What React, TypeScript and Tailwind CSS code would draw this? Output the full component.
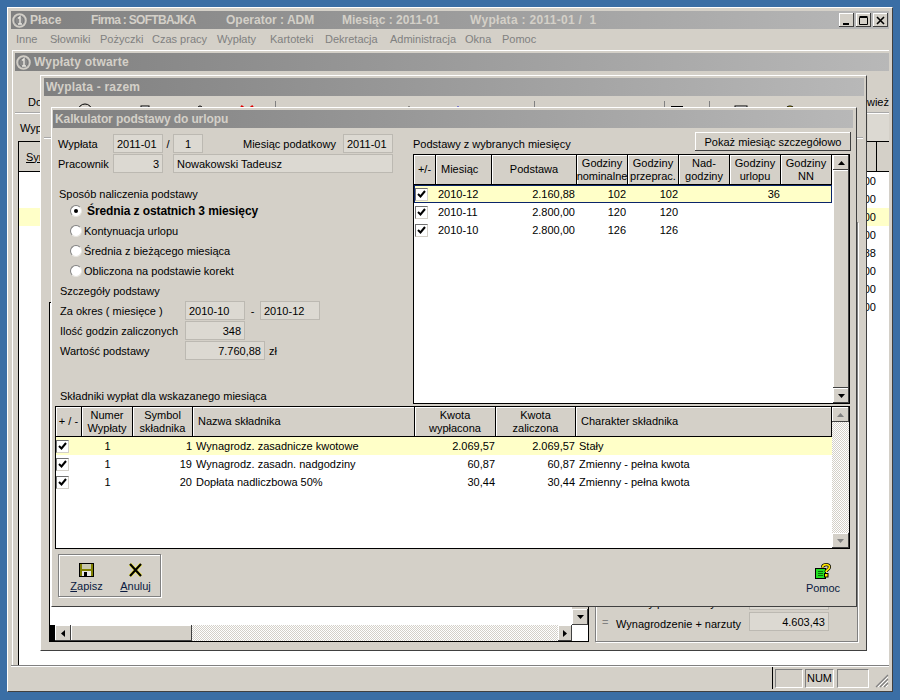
import React from "react";

const win = "border border-t-white border-l-white border-r-[#404040] border-b-[#404040] bg-[#d4d0c8]";
const dither = "bg-[repeating-conic-gradient(#d4d0c8_0_25%,#ffffff_0_50%)] bg-[length:2px_2px]";

function Title({ children, className = "" }: { children: React.ReactNode; className?: string }) {
  return (
    <div className={"h-[18px] shrink-0 flex items-center bg-gradient-to-r from-[#808080] to-[#b8b8b8] text-[#d4d0c8] font-bold font-['Liberation_Sans',sans-serif] text-[12px] whitespace-pre " + className}>
      {children}
    </div>
  );
}

function Logo() {
  return (
    <svg width="15" height="15" viewBox="0 0 15 15" className="shrink-0 mx-[1px]">
      <circle cx="7.5" cy="7.5" r="6.5" fill="#a8a8a8" stroke="#d4d0c8" strokeWidth="1.5" />
      <circle cx="7.5" cy="7.5" r="4.5" fill="#8a8a8a" stroke="#5f5f5f" strokeWidth="0.6" />
      <path d="M6 5.5 L8 3.8 V11 M6 11 H10" fill="none" stroke="#e8e6e0" strokeWidth="1.4" />
    </svg>
  );
}

function Arrow({ dir, color = "#000" }: { dir: "up" | "down" | "left" | "right"; color?: string }) {
  const pts = { up: "0,4 7,4 3.5,0", down: "0,0 7,0 3.5,4", left: "4,0 4,7 0,3.5", right: "0,0 0,7 4,3.5" }[dir];
  const h = dir === "up" || dir === "down";
  return (
    <svg width={h ? 7 : 4} height={h ? 4 : 7} viewBox={h ? "0 0 7 4" : "0 0 4 7"}>
      <polygon points={pts} fill={color} />
    </svg>
  );
}

function ScrollBtn({ dir, color, className = "" }: { dir: "up" | "down" | "left" | "right"; color?: string; className?: string }) {
  return (
    <div className={"shrink-0 flex items-center justify-center bg-[#d4d0c8] shadow-[inset_-1px_-1px_0_#404040,inset_1px_1px_0_#ffffff] " + className}>
      <Arrow dir={dir} color={color} />
    </div>
  );
}

function Check() {
  return (
    <div className="w-[13px] h-[13px] flex items-center justify-center bg-white border border-t-[#707070] border-l-[#707070] border-r-[#d4d0c8] border-b-[#d4d0c8]">
      <svg width="9" height="8" viewBox="0 0 9 8">
        <path d="M1 4 L3.5 6.5 L8 1" fill="none" stroke="#000" strokeWidth="2" />
      </svg>
    </div>
  );
}

function Field({ w, align = "left", children }: { w: string; align?: "left" | "right" | "center"; children: React.ReactNode }) {
  const a = align === "right" ? "justify-end pr-[3px]" : align === "center" ? "justify-center" : "justify-start pl-[3px]";
  return <div className={"h-[19px] flex items-center border border-[#bcb9b2] bg-[#dcd9d2] shrink-0 whitespace-nowrap " + w + " " + a}>{children}</div>;
}

function Radio({ on = false, bold = false, children }: { on?: boolean; bold?: boolean; children: React.ReactNode }) {
  return (
    <div className="h-[20px] flex items-center pl-[12px]">
      <div className="w-[12px] h-[12px] rounded-full bg-white border border-t-[#808080] border-l-[#808080] border-r-[#e8e6e0] border-b-[#e8e6e0] flex items-center justify-center shrink-0">
        {on && <div className="w-[4px] h-[4px] rounded-full bg-black" />}
      </div>
      <span className={bold ? "ml-[5px] font-bold text-[12px] tracking-[-0.1px] whitespace-nowrap" : "ml-[2px] whitespace-nowrap"}>{children}</span>
    </div>
  );
}

function Head({ w, children, left = false }: { w: string; children: React.ReactNode; left?: boolean }) {
  return (
    <div className={"shrink-0 h-full flex items-center border-r border-black bg-[#d4d0c8] shadow-[inset_1px_1px_0_#ffffff] leading-[13px] whitespace-nowrap " + w + (left ? " justify-start pl-[5px]" : " justify-center text-center")}>
      <span>{children}</span>
    </div>
  );
}

const topRows = [
  { m: "2010-12", p: "2.160,88", a: "102", b: "102", u: "36" },
  { m: "2010-11", p: "2.800,00", a: "120", b: "120", u: "" },
  { m: "2010-10", p: "2.800,00", a: "126", b: "126", u: "" },
];

const lowRows = [
  { s: "1", n: "Wynagrodz. zasadnicze kwotowe", k: "2.069,57", c: "Stały" },
  { s: "19", n: "Wynagrodz. zasadn. nadgodziny", k: "60,87", c: "Zmienny - pełna kwota" },
  { s: "20", n: "Dopłata nadliczbowa 50%", k: "30,44", c: "Zmienny - pełna kwota" },
];

function Dialog() {
  return (
    <div className={"absolute left-[39px] top-[57px] w-[806px] h-[500px] " + win}>
      <Title className="ml-[1px] mt-[2px] w-[800px] pl-[2px] tracking-[-0.1px]">Kalkulator podstawy do urlopu</Title>
      <div className="flex pl-[6px] h-[276px]">
        <div className="w-[335px] shrink-0">
          <div className="flex items-center mt-[6px]">
            <span className="w-[55px]">Wypłata</span>
            <Field w="w-[50px]">2011-01</Field>
            <span className="w-[10px] text-center">/</span>
            <Field w="w-[30px]" align="center">1</Field>
            <span className="ml-[40px] w-[100px] whitespace-nowrap">Miesiąc podatkowy</span>
            <Field w="w-[50px]">2011-01</Field>
          </div>
          <div className="flex items-center mt-[1px]">
            <span className="w-[55px]">Pracownik</span>
            <Field w="w-[50px]" align="right">3</Field>
            <span className="w-[10px]" />
            <Field w="w-[220px]">Nowakowski Tadeusz</Field>
          </div>
          <div className="mt-[14px] h-[15px] leading-[15px] pl-[1px]">Sposób naliczenia podstawy</div>
          <div className="-mt-[1px]">
            <Radio on bold>Średnia z ostatnich 3 miesięcy</Radio>
            <Radio>Kontynuacja urlopu</Radio>
            <Radio>Średnia z bieżącego miesiąca</Radio>
            <Radio>Obliczona na podstawie korekt</Radio>
          </div>
          <div className="mt-[2px] h-[16px] leading-[16px] pl-[2px]">Szczegóły podstawy</div>
          <div className="flex items-center mt-[2px] pl-[2px]">
            <span className="w-[125px] whitespace-nowrap">Za okres ( miesięce )</span>
            <Field w="w-[60px]">2010-10</Field>
            <span className="w-[15px] text-center">-</span>
            <Field w="w-[60px]">2010-12</Field>
          </div>
          <div className="flex items-center mt-[1px] pl-[2px]">
            <span className="w-[125px] whitespace-nowrap">Ilość godzin zaliczonych</span>
            <Field w="w-[60px]" align="right">348</Field>
          </div>
          <div className="flex items-center mt-[1px] pl-[2px]">
            <span className="w-[125px] whitespace-nowrap">Wartość podstawy</span>
            <Field w="w-[80px]" align="right">7.760,88</Field>
            <span className="ml-[4px]">zł</span>
          </div>
          <div className="mt-[28px] h-[16px] leading-[16px] pl-[2px] whitespace-nowrap">Składniki wypłat dla wskazanego miesiąca</div>
        </div>
        <div className="w-[438px] ml-[20px] shrink-0">
          <div className="flex justify-between items-end mt-[4px] h-[19px]">
            <span className="leading-[14px]">Podstawy z wybranych miesięcy</span>
            <div className="w-[156px] h-[19px] flex items-center justify-center bg-[#d4d0c8] shadow-[inset_-1px_-1px_0_#404040,inset_1px_1px_0_#ffffff] whitespace-nowrap">Pokaż miesiąc szczegółowo</div>
          </div>
          <div className="mt-[3px] w-[437px] h-[250px] border border-black bg-white flex">
            <div className="w-[418px] shrink-0 flex flex-col">
              <div className="flex h-[30px] border-b border-black shrink-0">
                <Head w="w-[22px]">+/-</Head>
                <Head w="w-[56px]" left>Miesiąc</Head>
                <Head w="w-[85px]">Podstawa</Head>
                <Head w="w-[51px]">Godziny<br />nominalne</Head>
                <Head w="w-[51px]">Godziny<br />przeprac.</Head>
                <Head w="w-[51px]">Nad-<br />godziny</Head>
                <Head w="w-[51px]">Godziny<br />urlopu</Head>
                <Head w="w-[51px]">Godziny<br />NN</Head>
              </div>
              {topRows.map((r, i) => (
                <div key={r.m} className={"flex h-[18px] items-center " + (i === 0 ? "bg-[#ffffc8] outline outline-1 -outline-offset-1 outline-[#0a246a]" : "")}>
                  <div className="w-[22px] pl-[1px] shrink-0"><Check /></div>
                  <div className="w-[56px] pl-[2px] shrink-0">{r.m}</div>
                  <div className="w-[85px] pr-[2px] text-right shrink-0">{r.p}</div>
                  <div className="w-[51px] pr-[2px] text-right shrink-0">{r.a}</div>
                  <div className="w-[51px] pr-[1px] text-right shrink-0">{r.b}</div>
                  <div className="w-[51px] shrink-0" />
                  <div className="w-[51px] pr-[1px] text-right shrink-0">{r.u}</div>
                </div>
              ))}
            </div>
            <div className="flex-1 flex flex-col bg-[#d4d0c8] border-l border-white">
              <ScrollBtn dir="up" className="h-[15px]" />
              <div className="flex-1 shadow-[inset_-1px_-1px_0_#404040,inset_1px_1px_0_#ffffff]" />
              <ScrollBtn dir="down" className="h-[15px]" />
            </div>
          </div>
        </div>
      </div>
      <div className="ml-[3px] mt-[2px] w-[795px] h-[143px] border border-black bg-white flex">
        <div className="w-[776px] shrink-0 flex flex-col">
          <div className="flex h-[30px] border-b border-black shrink-0">
            <Head w="w-[26px]">+ / -</Head>
            <Head w="w-[51px]">Numer<br />Wypłaty</Head>
            <Head w="w-[60px]">Symbol<br />składnika</Head>
            <Head w="w-[222px]" left>Nazwa składnika</Head>
            <Head w="w-[81px]">Kwota<br />wypłacona</Head>
            <Head w="w-[80px]">Kwota<br />zaliczona</Head>
            <Head w="w-[256px]" left>Charakter składnika</Head>
          </div>
          {lowRows.map((r, i) => (
            <div key={r.s} className={"flex h-[18px] items-center " + (i === 0 ? "bg-[#ffffc8]" : "")}>
              <div className="w-[26px] shrink-0"><Check /></div>
              <div className="w-[51px] text-center shrink-0">1</div>
              <div className="w-[60px] pr-[1px] text-right shrink-0">{r.s}</div>
              <div className="w-[222px] pl-[3px] shrink-0 whitespace-nowrap">{r.n}</div>
              <div className="w-[81px] pr-[1px] text-right shrink-0">{r.k}</div>
              <div className="w-[80px] pr-[1px] text-right shrink-0">{r.k}</div>
              <div className="pl-[3px] whitespace-nowrap">{r.c}</div>
            </div>
          ))}
        </div>
        <div className={"flex-1 flex flex-col " + dither}>
          <ScrollBtn dir="up" color="#808080" className="h-[15px]" />
          <div className="flex-1" />
          <ScrollBtn dir="down" color="#808080" className="h-[15px]" />
        </div>
      </div>
      <div className="flex justify-between items-start mt-[5px] ml-[6px] mr-[17px]">
        <div className="w-[103px] h-[43px] border border-[#808080] shadow-[1px_1px_0_#ffffff,inset_1px_1px_0_#ffffff] flex pl-[3px] text-[#0a1a40]">
          <div className="w-[49px] flex flex-col items-center pt-[8px]">
            <svg width="15" height="14" viewBox="0 0 15 14">
              <rect x="0.5" y="0.5" width="14" height="13" fill="#808000" stroke="#000" />
              <rect x="3" y="1" width="9" height="5" fill="#c8c8b0" />
              <rect x="3" y="8" width="9" height="5" fill="#e8e8e8" />
              <rect x="5" y="9" width="3" height="4" fill="#000" />
            </svg>
            <span className="mt-[2px]"><span className="underline">Z</span>apisz</span>
          </div>
          <div className="w-[49px] flex flex-col items-center pt-[8px]">
            <svg width="15" height="14" viewBox="0 0 15 14">
              <path d="M2 1 L13 13 M13 1 L2 13" stroke="#f2ea4a" strokeWidth="3.4" />
              <path d="M2 1 L13 13 M13 1 L2 13" stroke="#000" strokeWidth="2.2" />
            </svg>
            <span className="mt-[2px]"><span className="underline">A</span>nuluj</span>
          </div>
        </div>
        <div className="w-[32px] flex flex-col items-center pt-[9px] text-[#0a1a40]">
          <svg width="16" height="16" viewBox="0 0 16 16">
            <rect x="0.5" y="5.5" width="10" height="10" fill="#22e022" stroke="#000" />
            <path d="M3 8.5 H8 M3 10.5 H8 M3 12.5 H8" stroke="#0a6a0a" />
            <path d="M7.5 4.5 C7.5 1 14.5 0.5 14.5 4 C14.5 6.5 11 6.5 11 9" fill="none" stroke="#000" strokeWidth="3.2" />
            <path d="M7.5 4.5 C7.5 1 14.5 0.5 14.5 4 C14.5 6.5 11 6.5 11 9" fill="none" stroke="#ffe600" strokeWidth="1.7" />
            <rect x="9.5" y="10.5" width="3.5" height="3.5" fill="#ffe600" stroke="#000" />
          </svg>
          <span className="mt-[2px]">Pomoc</span>
        </div>
      </div>
    </div>
  );
}

function RazemWindow() {
  return (
    <div className={"absolute left-[28px] top-[25px] w-[827px] h-[576px] flex flex-col " + win}>
      <Title className="ml-[3px] mt-[2px] w-[820px] pl-[2px] tracking-[0.2px]">Wyplata - razem</Title>
      <svg width="820" height="12" viewBox="0 0 820 12" className="ml-[3px] mt-[4px] shrink-0">
        <path d="M34 11 A7 7 0 0 1 48 11" fill="none" stroke="#000" />
        <rect x="97" y="6" width="8" height="6" fill="#fff" stroke="#000" />
        <path d="M153 8 Q156 4 159 8" fill="none" stroke="#000" />
        <path d="M197 6 L203 11 M209 6 L203 11" stroke="#e00000" strokeWidth="2.4" />
        <rect x="231" y="1" width="1" height="11" fill="#808080" />
        <rect x="267" y="9" width="6" height="3" fill="#00e8e8" />
        <path d="M361 11 A4 4 0 0 1 369 11" fill="#00d000" stroke="#000" />
        <path d="M401 11 L405 7 L409 11Z" fill="#e00000" />
        <path d="M403 11 L407 7 L411 11Z" fill="#f0e000" />
        <path d="M410 11 L414 6 L418 11Z" fill="#0000d0" />
        <rect x="459" y="8" width="10" height="4" fill="#fff" stroke="#000" />
        <rect x="490" y="1" width="1" height="11" fill="#808080" />
        <rect x="620" y="1" width="1" height="11" fill="#808080" />
        <rect x="627" y="6" width="12" height="2" fill="#000" />
        <path d="M650 11 L652 8 L654 11Z" fill="#0000d0" />
        <rect x="665" y="1" width="1" height="11" fill="#808080" />
        <rect x="691" y="6" width="12" height="6" fill="#fff" stroke="#000" />
        <path d="M741 11 A5 5 0 0 1 751 11" fill="#ffe600" stroke="#000" />
        <path d="M797 11 L800 7" stroke="#000" />
      </svg>
      <div className="mx-[3px] mt-[25px] h-[2px] bg-[#a8a8a8] border-b border-white shrink-0" />
      <div className="flex-1" />
      <div className="flex items-end gap-[6px] pl-[8px] pb-[8px]">
        <div className="w-[540px] h-[340px] border border-black bg-white flex flex-col">
          <div className="flex-1 flex justify-end">
            <div className="w-[16px] flex flex-col justify-end bg-[#d4d0c8]">
              <ScrollBtn dir="down" className="h-[16px]" />
            </div>
          </div>
          <div className="h-[16px] flex shrink-0">
            <div className="w-[5px] bg-black shrink-0" />
            <ScrollBtn dir="left" className="w-[16px]" />
            <div className="w-[121px] shrink-0 bg-[#d4d0c8] shadow-[inset_-1px_-1px_0_#404040,inset_1px_1px_0_#ffffff]" />
            <div className={"flex-1 " + dither} />
            <ScrollBtn dir="right" className="w-[14px]" />
            <div className="w-[16px] bg-white shrink-0" />
          </div>
        </div>
        <div className="w-[263px] h-[420px] border border-[#808080] shadow-[inset_1px_1px_0_#ffffff,1px_1px_0_#ffffff] flex flex-col justify-end pb-[10px] pl-[6px]">
          <div className="flex items-center h-[19px] mb-[2px]">
            <span className="w-[14px]" />
            <span className="w-[133px] mt-[4px] whitespace-nowrap">Narzuty pracodawcy</span>
            <Field w="w-[80px]" align="right">1.000,00</Field>
          </div>
          <div className="flex items-center h-[19px]">
            <span className="w-[14px] text-[#808080] mt-[1px]">=</span>
            <span className="w-[133px] mt-[4px] whitespace-nowrap">Wynagrodzenie + narzuty</span>
            <Field w="w-[80px]" align="right">4.603,43</Field>
          </div>
        </div>
      </div>
    </div>
  );
}

function OtwarteWindow() {
  const vals = ["1.200,00", "1.500,00", "2.800,00", "1.900,00", "3.120,88", "2.400,00", "1.700,00", "2.000,00"];
  return (
    <div className="absolute left-0 top-0 w-[885px] h-[700px] bg-[#d4d0c8] border-l border-t border-white flex flex-col">
      <Title className="ml-[2px] mt-[2px] w-[874px] tracking-[0.2px]"><Logo /><span className="ml-[2px]">Wypłaty otwarte</span></Title>
      <div className="h-[41px] flex justify-between pl-[15px] pr-[8px] shrink-0">
        <span className="mt-[24px]">Do</span>
        <span className="mt-[24px]">Odśwież</span>
      </div>
      <div className="mx-[2px] w-[874px] h-[2px] bg-[#a8a8a8] border-b border-white shrink-0" />
      <div className="h-[27px] flex justify-between items-center pl-[7px] w-[876px] shrink-0">
        <span>Wypłaty</span>
        <div className="w-[21px] h-full bg-[#dcd9d2]" />
      </div>
      <div className="ml-[5px] w-[880px] flex-1 border-l border-t border-black bg-white flex flex-col">
        <div className="h-[30px] flex border-b border-black bg-[#d4d0c8] shrink-0">
          <div className="w-[858px] border-r border-black pl-[7px] flex items-center underline">Symbol</div>
        </div>
        {vals.map((v, i) => (
          <div key={i} className={"h-[18px] w-[870px] flex items-center justify-start shrink-0 " + (i === 2 ? "bg-[#ffffc8]" : "")}>
            <div className="w-[857px] text-right">{v}</div>
          </div>
        ))}
      </div>
    </div>
  );
}

export default function App() {
  const menu: [string, string][] = [
    ["Inne", "w-[34px]"], ["Słowniki", "w-[50px]"], ["Pożyczki", "w-[52px]"], ["Czas pracy", "w-[65px]"],
    ["Wypłaty", "w-[53px]"], ["Kartoteki", "w-[55px]"], ["Dekretacja", "w-[65px]"], ["Administracja", "w-[75px]"],
    ["Okna", "w-[37px]"], ["Pomoc", "w-[40px]"],
  ];
  return (
    <div className="relative w-[900px] h-[700px] overflow-hidden bg-[#3a6ea5] text-black text-[11px] leading-[14px] font-['Liberation_Sans',sans-serif]">
      <div className={"absolute left-[7px] top-[7px] w-[886px] h-[685px] flex flex-col pl-[3px] pr-[3px] pt-[3px] " + win}>
        <div className="h-[18px] flex items-center bg-gradient-to-r from-[#808080] to-[#b8b8b8] text-[#d4d0c8] font-bold text-[12px] shrink-0 whitespace-pre">
          <Logo />
          <span className="ml-[2px] w-[61px]">Płace</span>
          <span className="w-[135px] tracking-[-0.7px]">Firma : SOFTBAJKA</span>
          <span className="w-[116px]">Operator : ADM</span>
          <span className="w-[128px]">Miesiąc : 2011-01</span>
          <span className="tracking-[0.3px]">Wypłata : 2011-01 /  1</span>
          <div className="ml-auto flex items-center gap-[2px] pr-[1px] text-black">
            {["min", "max", "close"].map((k) => (
              <div key={k} className="w-[15px] h-[14px] bg-[#d4d0c8] shadow-[inset_-1px_-1px_0_#404040,inset_1px_1px_0_#ffffff] flex items-center justify-center">
                <svg width="9" height="9" viewBox="0 0 9 9">
                  {k === "min" && <rect x="1" y="7" width="6" height="2" fill="#000" />}
                  {k === "max" && <path d="M0.5 1.5 H8.5 V8.5 H0.5 Z M0.5 0.5 H8.5" fill="none" stroke="#000" />}
                  {k === "close" && <path d="M1 1 L8 8 M8 1 L1 8" stroke="#000" strokeWidth="1.6" />}
                </svg>
              </div>
            ))}
          </div>
        </div>
        <div className="h-[21px] flex items-center pl-[5px] pb-[2px] text-[#808080] shrink-0 whitespace-nowrap">
          {menu.map(([t, w]) => <span key={t} className={w}>{t}</span>)}
        </div>
        <div className="relative ml-[1px] h-[615px] shrink-0 overflow-hidden bg-white">
          <OtwarteWindow />
          <RazemWindow />
          <Dialog />
        </div>
        <div className="h-[25px] border-t border-[#808080] shadow-[inset_0_1px_0_#ffffff] flex items-center justify-end shrink-0">
          <div className="w-[1px] h-[22px] bg-black" />
          <div className="ml-[2px] w-[28px] h-[19px] border border-t-[#808080] border-l-[#808080] border-r-white border-b-white" />
          <div className="ml-[2px] w-[29px] h-[19px] border border-t-[#808080] border-l-[#808080] border-r-white border-b-white flex items-center justify-center">NUM</div>
          <div className="ml-[3px] w-[32px] h-[19px] border border-t-[#808080] border-l-[#808080] border-r-white border-b-white" />
          <svg width="14" height="14" viewBox="0 0 14 14" className="ml-[6px] self-end mb-[2px]">
            <path d="M13 1 L1 13 M13 5 L5 13 M13 9 L9 13" stroke="#808080" strokeWidth="1.2" />
            <path d="M13 3 L3 13 M13 7 L7 13 M13 11 L11 13" stroke="#ffffff" />
          </svg>
        </div>
      </div>
    </div>
  );
}
